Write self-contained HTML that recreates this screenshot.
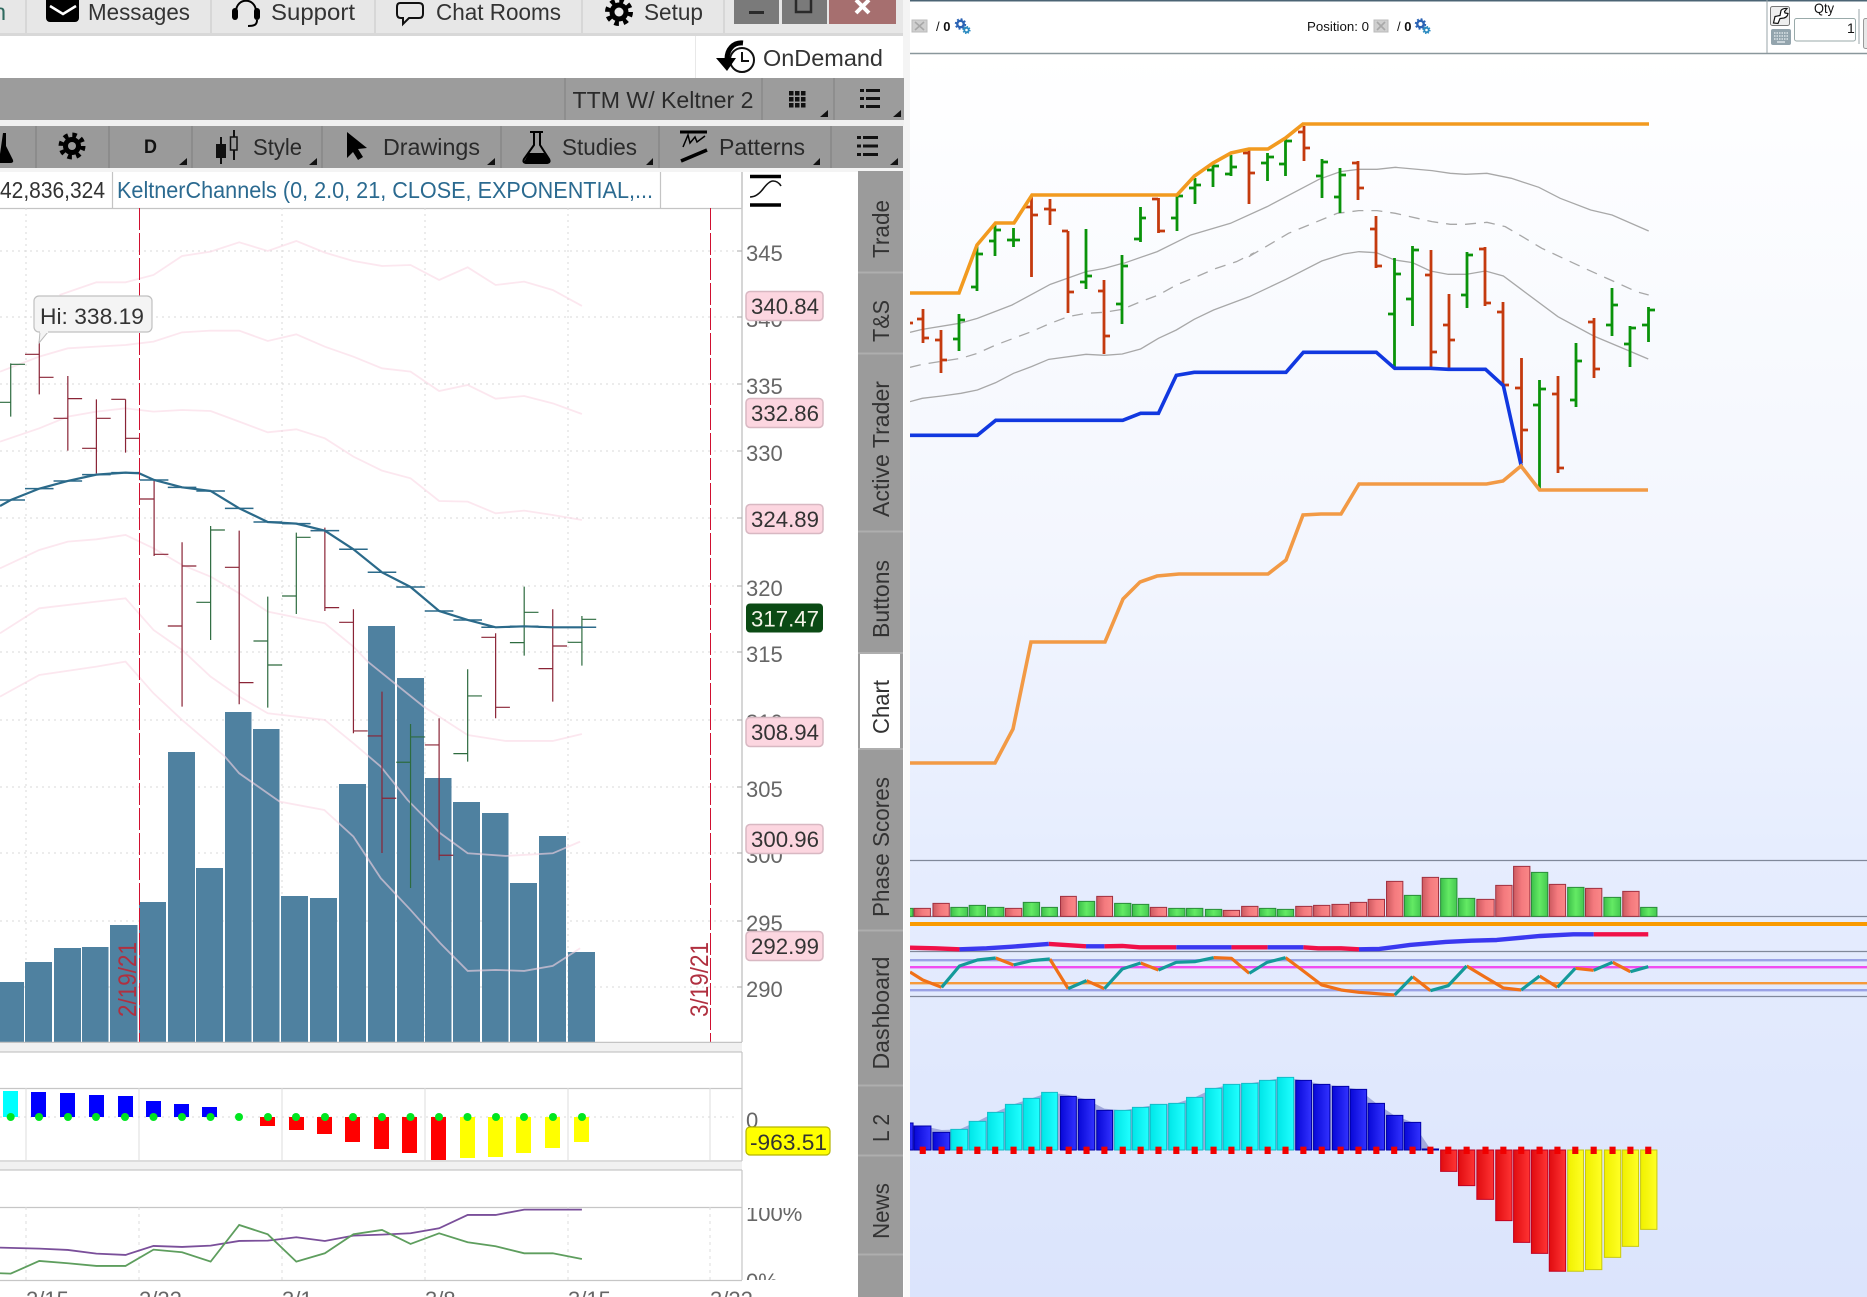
<!DOCTYPE html>
<html><head><meta charset="utf-8"><title>Chart</title>
<style>
html,body{margin:0;padding:0;width:1867px;height:1297px;overflow:hidden;background:#fff}
svg{display:block}
text{font-family:"Liberation Sans",sans-serif}
.n *{vector-effect:non-scaling-stroke}
.r rect{fill:url(#gr);stroke:#a03040;stroke-width:1}
.g rect{fill:url(#gg);stroke:#2a8c3a;stroke-width:1}
.b rect{fill:url(#gb);stroke:#0000a8;stroke-width:1}
.c rect{fill:url(#gc);stroke:#14bcc8;stroke-width:1}
.d rect{fill:url(#gd);stroke:#c00020;stroke-width:1}
.y rect{fill:url(#gy);stroke:#c8c810;stroke-width:1}
.ax{font-size:22px;fill:#666}
.pl{fill:#fcd6e0;stroke:#d8b8c2;stroke-width:1.5}
.pt{font-size:22.5px;fill:#333}
.tb{font-size:23.5px;fill:#333}
.vt{font-size:23px;fill:#333;text-anchor:middle}
</style></head><body>
<svg width="1867" height="1297" viewBox="0 0 1867 1297" xmlns="http://www.w3.org/2000/svg">
<defs>
<linearGradient id="bg" gradientUnits="userSpaceOnUse" x1="0" y1="54" x2="0" y2="1297"><stop offset="0" stop-color="#fff"/><stop offset=".4" stop-color="#f3f6fe"/><stop offset=".64" stop-color="#e6edfe"/><stop offset="1" stop-color="#dbe4fc"/></linearGradient>
<linearGradient id="gr"><stop offset="0" stop-color="#cc5a60"/><stop offset=".5" stop-color="#f47a7e"/><stop offset="1" stop-color="#fa8888"/></linearGradient>
<linearGradient id="gg"><stop offset="0" stop-color="#3cc04a"/><stop offset=".5" stop-color="#64ea64"/><stop offset="1" stop-color="#44c850"/></linearGradient>
<linearGradient id="gb"><stop offset="0" stop-color="#0808d8"/><stop offset="1" stop-color="#3232ff"/></linearGradient>
<linearGradient id="gc"><stop offset="0" stop-color="#00e6e8"/><stop offset="1" stop-color="#20ffff"/></linearGradient>
<linearGradient id="gd"><stop offset="0" stop-color="#e00c10"/><stop offset="1" stop-color="#ff3434"/></linearGradient>
<linearGradient id="gy"><stop offset="0" stop-color="#f0f000"/><stop offset="1" stop-color="#ffff24"/></linearGradient>
<clipPath id="p3"><rect x="742" y="1208" width="100" height="72"/></clipPath>
<clipPath id="pm"><rect x="0" y="208" width="742" height="834"/></clipPath>
<clipPath id="rp"><rect x="910" y="54" width="957" height="1243"/></clipPath>
</defs>

<!-- top tab row -->
<rect width="904" height="33" fill="#e7e7e7"/>
<rect y="33" width="904" height="3" fill="#d8d8d8"/>
<path d="M26 0V33M211 0V33M375 0V33M582 0V33M724 0V33" stroke="#d2d2d2" stroke-width="1.5"/>
<text x="-7" y="20" class="tb" style="fill:#2f6a5f">n</text>
<rect x="46" y="-4" width="33" height="26" rx="4" fill="#000"/>
<path d="M50 6L63 14L76 6" fill="none" stroke="#fff" stroke-width="2.5"/>
<text x="88" y="20" class="tb" textLength="102" lengthAdjust="spacingAndGlyphs">Messages</text>
<path d="M236 12C236-3 256-3 256 12" fill="none" stroke="#000" stroke-width="2"/>
<rect x="232" y="8" width="6" height="12" rx="3" fill="#000"/><rect x="254" y="8" width="6" height="12" rx="3" fill="#000"/>
<path d="M257 20C257 25 254 26 248 26" fill="none" stroke="#000" stroke-width="2"/>
<text x="271" y="20" class="tb" textLength="84" lengthAdjust="spacingAndGlyphs">Support</text>
<path d="M400 3H419Q423 3 423 7V14Q423 18 419 18H409L403 24V18H401Q397 18 397 14V7Q397 3 400 3Z" fill="none" stroke="#111" stroke-width="2"/>
<text x="436" y="20" class="tb" textLength="125" lengthAdjust="spacingAndGlyphs">Chat Rooms</text>
<circle cx="619" cy="12" r="9.5" fill="#000"/><circle cx="619" cy="12" r="11.5" fill="none" stroke="#000" stroke-width="5" stroke-dasharray="4.5 4.53"/><circle cx="619" cy="12" r="4.5" fill="#e7e7e7"/>
<text x="644" y="20" class="tb" textLength="59" lengthAdjust="spacingAndGlyphs">Setup</text>
<rect x="734" y="0" width="45" height="24" fill="#7a7a7a"/><rect x="749" y="11" width="15" height="3" fill="#2a2a2a"/>
<rect x="782" y="0" width="45" height="24" fill="#7a7a7a"/><path d="M796 -2V12H811V-2Z" fill="none" stroke="#2a2a2a" stroke-width="2.5"/>
<rect x="829" y="0" width="67" height="24" fill="#a66f6f"/><path d="M856 0L869 13M869 0L856 13" stroke="#fff" stroke-width="4"/>

<!-- OnDemand row -->
<rect x="0" y="36" width="904" height="42" fill="#fff"/>
<path d="M695.5 36V78" stroke="#e8e8e8"/>
<rect x="903" y="0" width="7" height="210" fill="#f4f4f4"/>
<circle cx="742" cy="60" r="12" fill="#fff" stroke="#111" stroke-width="2"/>
<path d="M742 52V61H749" fill="none" stroke="#111" stroke-width="2"/>
<path d="M743 43C733 42 727 50 727 59" fill="none" stroke="#000" stroke-width="5"/>
<path d="M716 58H736L727 71Z" fill="#000"/>
<text x="763" y="66" class="tb" textLength="120" lengthAdjust="spacingAndGlyphs">OnDemand</text>

<!-- grey row 1 -->
<rect y="78" width="904" height="42" fill="#9c9c9c"/>
<path d="M565 78V120M762 78V120M834 78V120" stroke="#8a8a8a" stroke-width="1.5"/>
<text x="572.5" y="108" class="tb" textLength="181" lengthAdjust="spacingAndGlyphs" style="fill:#2a2a2a">TTM W/ Keltner 2</text>
<g fill="#111"><rect x="789" y="91" width="4.5" height="4.5"/><rect x="795" y="91" width="4.5" height="4.5"/><rect x="801" y="91" width="4.5" height="4.5"/><rect x="789" y="97" width="4.5" height="4.5"/><rect x="795" y="97" width="4.5" height="4.5"/><rect x="801" y="97" width="4.5" height="4.5"/><rect x="789" y="103" width="4.5" height="4.5"/><rect x="795" y="103" width="4.5" height="4.5"/><rect x="801" y="103" width="4.5" height="4.5"/></g>
<path d="M860 90.5H864M866 90.5H880M860 98.5H864M866 98.5H880M860 106.5H864M866 106.5H880" stroke="#111" stroke-width="3"/>
<path d="M828 110V117H820ZM901 110V117H893Z" fill="#111"/>
<rect y="120" width="904" height="6" fill="#f0f0f0"/>

<!-- grey row 2 -->
<rect y="126" width="903" height="42" fill="#9a9a9a"/>
<path d="M36 126V168M109 126V168M192 126V168M322 126V168M501 126V168M659 126V168M831 126V168" stroke="#888" stroke-width="1.5"/>
<path d="M3 133H6V146L13 160Q14 163 10 163H0V154Z" fill="#000"/>
<circle cx="72" cy="146" r="9" fill="#000"/><circle cx="72" cy="146" r="11" fill="none" stroke="#000" stroke-width="5" stroke-dasharray="4.3 4.34"/><circle cx="72" cy="146" r="4" fill="#9a9a9a"/>
<text x="144" y="153" style="font-size:19px;font-weight:bold;fill:#111" textLength="13" lengthAdjust="spacingAndGlyphs">D</text>
<path d="M187 158V165H179ZM317 158V165H309ZM495 158V165H487ZM653 158V165H646ZM820 158V165H813ZM898 158V165H890Z" fill="#111"/>
<path d="M221 137V164" stroke="#111" stroke-width="2"/>
<rect x="216" y="144" width="10" height="14" fill="#111"/>
<path d="M234 130V160" stroke="#111" stroke-width="2"/>
<rect x="230.5" y="137" width="6.5" height="13" fill="#9a9a9a" stroke="#111" stroke-width="1.5"/>
<text x="253" y="155" class="tb" textLength="49" lengthAdjust="spacingAndGlyphs" style="fill:#2a2a2a">Style</text>
<path d="M347 132V158L353 152L358 160L363 157L358 149L367 148Z" fill="#000"/>
<text x="383" y="155" class="tb" textLength="97" lengthAdjust="spacingAndGlyphs" style="fill:#2a2a2a">Drawings</text>
<path d="M530 132H543M534 132V145L524 159Q522 163 527 163H546Q551 163 549 159L540 145V132" fill="none" stroke="#000" stroke-width="2"/>
<path d="M529 153H544L549 160Q550 163 546 163H527Q523 163 525 160Z" fill="#000"/>
<text x="562" y="155" class="tb" textLength="75" lengthAdjust="spacingAndGlyphs" style="fill:#2a2a2a">Studies</text>
<path d="M680 132H707" stroke="#000" stroke-width="3"/>
<path d="M683 147L688 135L690 143L695 137L697 142L705 136" fill="none" stroke="#000" stroke-width="1.5"/>
<path d="M681 161L707 150" stroke="#000" stroke-width="3.5"/>
<text x="719" y="155" class="tb" textLength="86" lengthAdjust="spacingAndGlyphs" style="fill:#2a2a2a">Patterns</text>
<path d="M857 137.5H861M863 137.5H878M857 146H861M863 146H878M857 154.5H861M863 154.5H878" stroke="#111" stroke-width="3"/>
<rect y="168" width="903" height="4" fill="#f4f4f4"/>

<!-- info row -->
<rect x="0" y="172" width="742" height="36" fill="#fff"/>
<path d="M0 208.5H742M112.5 172V208M660.5 172V208M742 172V208" stroke="#c4c4c4" stroke-width="1.2"/>
<text x="0" y="198" class="tb" textLength="105" lengthAdjust="spacingAndGlyphs">42,836,324</text>
<text x="117" y="198" class="tb" textLength="536" lengthAdjust="spacingAndGlyphs" style="fill:#2b6a90">KeltnerChannels (0, 2.0, 21, CLOSE, EXPONENTIAL,...</text>
<path d="M750 176.5H781M750 205H781" stroke="#000" stroke-width="3.5"/>
<path d="M750 197Q757 197 763 189Q769 181 773 181Q778 181 781 186" fill="none" stroke="#111" stroke-width="1.6"/>

<!-- main left chart -->
<g stroke="#d9d9d9" stroke-dasharray="2 4" stroke-width="1">
<path d="M26 208V1042M282 208V1042M425 208V1042M568 208V1042"/>
<path d="M0 251H736M0 317H736M0 384H736M0 451H736M0 518H736M0 586H736M0 652H736M0 720H736M0 787H736M0 853H736M0 921H736M0 987H736"/>
</g>
<g fill="#4f81a0">
<rect x="0" y="982" width="24" height="60"/><rect x="25" y="962" width="27" height="80"/><rect x="54" y="948" width="27" height="94"/><rect x="82" y="947" width="26.5" height="95"/><rect x="110" y="925" width="27.5" height="117"/><rect x="139" y="902" width="27" height="140"/><rect x="168" y="752" width="27" height="290"/><rect x="196" y="868" width="27" height="174"/><rect x="225" y="712" width="26.5" height="330"/><rect x="253" y="729" width="26.5" height="313"/><rect x="281" y="896" width="27" height="146"/><rect x="310" y="898" width="27" height="144"/><rect x="339" y="784" width="27" height="258"/><rect x="368" y="626" width="27" height="416"/><rect x="397" y="678" width="27" height="364"/><rect x="425" y="778" width="26.5" height="264"/><rect x="453" y="802" width="27" height="240"/><rect x="482" y="813" width="26.5" height="229"/><rect x="510" y="883" width="27" height="159"/><rect x="539" y="836" width="27" height="206"/><rect x="568" y="952" width="27" height="90"/>
</g>
<g class="n" fill="none" stroke="rgba(250,215,228,.6)" stroke-width="1.8">
<g transform="translate(0,0) scale(.595,.3333)"><polyline points="100,885 162,847 211,847 258,825 306,768 354,755 402,727 450,753 498,723 546,758 594,783 642,798 690,795 738,840 786,802 833,855 881,845 929,870 978,918"/></g>
<g transform="translate(0,300) scale(.595,.3333)">
<polyline points="0,215 66,170 114,145 162,140 211,135 258,125 306,97 354,92 402,92 450,123 498,103 546,140 594,170 642,205 690,215 738,273 786,255 833,296 881,288 929,310 978,342"/>
<polyline points="0,425 66,385 114,350 162,335 211,325 258,335 306,330 354,333 402,365 450,397 498,388 546,415 594,470 642,512 690,535 738,603 786,605 833,640 881,632 929,645 978,660"/>
<polyline points="0,805 66,750 114,725 162,718 211,705 258,745 306,795 354,830 402,880 450,935 546,970 594,1040 618,1085 712,1220 786,1305 850,1323 929,1323 978,1302"/>
<polyline points="0,1000 66,925 162,905 211,895 258,990 306,1050 354,1130 402,1190 450,1240 546,1260 594,1330 640,1400 685,1500 740,1600 786,1660 850,1668 929,1660 975,1625"/>
<polyline points="0,1190 66,1125 162,1100 211,1085 258,1180 306,1260 378,1370 402,1420 470,1505 545,1530 594,1610 640,1735 690,1830 740,1930 786,2013 833,2010 881,2013 929,1998 975,1945"/>
</g></g>
<g class="n" transform="translate(0,300) scale(.595,.3333)" fill="none" stroke-width="1.2">
<path stroke="#8a2436" d="M66 125V283M42 163H66M66 232H90M114 228V452M90 355H114M114 296H138M162 298V520M138 445H162M162 355H186M211 298V458M187 298H211M211 415H235M259 540V768M235 597H259M259 763H283M306 727V1220M282 978H306M306 798H330M402 692V1213M378 802H402M402 1148H426M546 683V933M522 692H546M546 923H570M594 928V1300M570 967H594M594 1293H618M642 1175V1659M618 1308H642M642 1495H666M738 1255V1681M714 1335H738M738 1666H762M833 1000V1255M809 1012H833M833 1222H857M929 928V1205M905 1106H929M929 1038H953"/>
<path stroke="#2d6b3f" d="M18 190V350M-6 307H18M18 193H42M354 678V1020M330 907H354M354 690H378M450 890V1223M426 1023H450M450 1095H474M498 698V942M474 888H498M498 712H522M690 1272V1764M666 1387H690M690 1311H714M786 1108V1385M762 1361H786M786 1188H810M881 860V1067M857 1028H881M881 937H905M978 948V1097M954 1027H978M978 958H1002"/>
<polyline stroke="#2b6a8a" stroke-width="2.2" points="0,618 18,600 66,566 114,543 162,524 211,518 234,520 259,540 306,562 354,573 402,625 450,666 498,671 546,692 594,748 642,817 690,861 738,933 786,960 833,982 881,979 929,982 978,982"/>
<path stroke="#2b6a8a" stroke-width="1.5" d="M-6 600H42M42 566H90M90 543H138M138 524H186M187 518H235M235 540H283M282 562H330M330 573H378M378 625H426M426 666H474M474 671H522M522 692H570M570 748H618M618 817H666M666 861H714M714 933H762M762 960H810M809 982H857M857 979H905M905 982H953M954 982H1002"/>
</g>
<path d="M139.5 208V1042M710.5 208V1042" stroke="#d01030" stroke-width="1" stroke-dasharray="22 3"/>
<text transform="translate(136,1017) rotate(-90)" style="font-size:25px;fill:#b03040" textLength="75" lengthAdjust="spacingAndGlyphs">2/19/21</text>
<text transform="translate(708,1017) rotate(-90)" style="font-size:25px;fill:#b03040" textLength="75" lengthAdjust="spacingAndGlyphs">3/19/21</text>
<path d="M40 332H48L39 343Z" fill="#f4f4f4" stroke="#bbb"/>
<rect x="34" y="296" width="118" height="36" rx="5" fill="#f4f4f4" stroke="#c0c0c0" stroke-width="1.2"/>
<rect x="40" y="330" width="8" height="3" fill="#f4f4f4"/>
<text x="40" y="324" class="pt" textLength="104" lengthAdjust="spacingAndGlyphs">Hi: 338.19</text>

<!-- axis -->
<path d="M742 172V1042" stroke="#c8c8c8" stroke-width="1.5"/>
<path d="M0 1042.5H742" stroke="#c4c4c4" stroke-width="1.5"/>
<path d="M737 251H742M737 317H742M737 384H742M737 451H742M737 518H742M737 586H742M737 652H742M737 720H742M737 787H742M737 853H742M737 921H742M737 987H742" stroke="#aaa"/>
<g class="ax"><text x="746" y="261" class="ax">345</text><text x="746" y="327" class="ax">340</text><text x="746" y="394" class="ax">335</text><text x="746" y="461" class="ax">330</text><text x="746" y="596" class="ax">320</text><text x="746" y="662" class="ax">315</text><text x="746" y="730" class="ax">310</text><text x="746" y="797" class="ax">305</text><text x="746" y="863" class="ax">300</text><text x="746" y="931" class="ax">295</text><text x="746" y="997" class="ax">290</text></g>
<rect class="pl" x="746" y="291.5" width="77" height="29" rx="4"/><text x="751" y="314" class="pt" textLength="68" lengthAdjust="spacingAndGlyphs">340.84</text>
<rect class="pl" x="746" y="398.5" width="77" height="29" rx="4"/><text x="751" y="421" class="pt" textLength="68" lengthAdjust="spacingAndGlyphs">332.86</text>
<rect class="pl" x="746" y="504.5" width="77" height="29" rx="4"/><text x="751" y="527" class="pt" textLength="68" lengthAdjust="spacingAndGlyphs">324.89</text>
<rect x="746" y="603.5" width="77" height="29" rx="4" fill="#0b4a14"/><text x="751" y="626.5" class="pt" textLength="68" lengthAdjust="spacingAndGlyphs" style="fill:#f4f4e8">317.47</text>
<rect class="pl" x="746" y="717.5" width="77" height="29" rx="4"/><text x="751" y="740" class="pt" textLength="68" lengthAdjust="spacingAndGlyphs">308.94</text>
<rect class="pl" x="746" y="824.5" width="77" height="29" rx="4"/><text x="751" y="847" class="pt" textLength="68" lengthAdjust="spacingAndGlyphs">300.96</text>
<rect class="pl" x="746" y="931.5" width="77" height="29" rx="4"/><text x="751" y="954" class="pt" textLength="68" lengthAdjust="spacingAndGlyphs">292.99</text>

<!-- panel 2 -->
<rect x="0" y="1043" width="742" height="9" fill="#f1f1f1"/>
<path d="M0 1052H742M0 1088.5H742M0 1161H742M742 1052V1161" stroke="#c6c6c6" stroke-width="1.2"/>
<path d="M26 1088V1161M139 1088V1161M282 1088V1161M425 1088V1161M568 1088V1161M710 1088V1161" stroke="#dcdcdc"/>
<path d="M0 1117H736" stroke="#d8d8d8" stroke-dasharray="2 4"/>
<g fill="#0000ff"><rect x="31" y="1092" width="15" height="25"/><rect x="60" y="1093" width="15" height="24"/><rect x="89" y="1095" width="15" height="22"/><rect x="118" y="1096" width="15" height="21"/><rect x="146" y="1101" width="15" height="16"/><rect x="174" y="1104" width="15" height="13"/><rect x="202" y="1107" width="15" height="10"/></g>
<rect x="3" y="1091" width="15" height="26" fill="#00ffff"/>
<g fill="#ff0000"><rect x="260" y="1117" width="15" height="9"/><rect x="289" y="1117" width="15" height="13"/><rect x="317" y="1117" width="15" height="17"/><rect x="345" y="1117" width="15" height="25"/><rect x="374" y="1117" width="15" height="32"/><rect x="402" y="1117" width="15" height="36"/><rect x="431" y="1117" width="15" height="43"/></g>
<g fill="#ffff00"><rect x="460" y="1117" width="15" height="41"/><rect x="488" y="1117" width="15" height="40"/><rect x="516" y="1117" width="15" height="36"/><rect x="545" y="1117" width="15" height="31"/><rect x="574" y="1117" width="15" height="25"/></g>
<g fill="#00e620"><circle cx="10.7" cy="1117" r="4"/><circle cx="39" cy="1117" r="4"/><circle cx="68" cy="1117" r="4"/><circle cx="96" cy="1117" r="4"/><circle cx="125" cy="1117" r="4"/><circle cx="153.5" cy="1117" r="4"/><circle cx="182" cy="1117" r="4"/><circle cx="210.5" cy="1117" r="4"/><circle cx="239" cy="1117" r="4"/><circle cx="268" cy="1117" r="4"/><circle cx="296" cy="1117" r="4"/><circle cx="325" cy="1117" r="4"/><circle cx="353" cy="1117" r="4"/><circle cx="382" cy="1117" r="4"/><circle cx="410.5" cy="1117" r="4"/><circle cx="439" cy="1117" r="4"/><circle cx="467.5" cy="1117" r="4"/><circle cx="496" cy="1117" r="4"/><circle cx="524" cy="1117" r="4"/><circle cx="553" cy="1117" r="4"/><circle cx="582" cy="1117" r="4"/></g>
<text x="746" y="1128" class="ax">0</text>
<rect x="746" y="1127" width="84" height="28" rx="4" fill="#ffff00" stroke="#b4b400" stroke-width="1.2"/>
<text x="750" y="1150" class="pt" textLength="77" lengthAdjust="spacingAndGlyphs">-963.51</text>

<!-- panel 3 -->
<rect x="0" y="1162" width="742" height="8" fill="#f1f1f1"/>
<path d="M0 1170H742M0 1207.5H742M0 1280.5H742M742 1170V1280" stroke="#c6c6c6" stroke-width="1.2"/>
<path d="M26 1207V1280M139 1207V1280M282 1207V1280M425 1207V1280M568 1207V1280M710 1207V1280" stroke="#dcdcdc" stroke-dasharray="3 4"/>
<g class="n" transform="translate(0,800) scale(.595,.3333)" fill="none" stroke-width="1.8">
<polyline stroke="#7a4f9a" points="0,1343 66,1346 114,1350 162,1361 211,1365 258,1338 306,1341 354,1337 402,1323 450,1322 498,1312 546,1323 594,1307 642,1304 690,1300 738,1285 786,1245 833,1245 881,1229 929,1229 978,1229"/>
<polyline stroke="#5e9e5e" points="0,1420 18,1421 66,1383 114,1390 162,1398 211,1398 258,1349 306,1357 354,1385 402,1275 450,1303 498,1385 546,1360 594,1303 642,1290 690,1332 738,1300 786,1327 833,1339 881,1360 929,1360 978,1377"/>
</g>
<g clip-path="url(#p3)"><text x="746" y="1221" class="ax">100%</text><text x="746" y="1289" class="ax">0%</text></g>
<g class="ax"><text x="26" y="1307" class="ax">2/15</text><text x="139" y="1307" class="ax">2/22</text><text x="282" y="1307" class="ax">3/1</text><text x="425" y="1307" class="ax">3/8</text><text x="568" y="1307" class="ax">3/15</text><text x="710" y="1307" class="ax">3/22</text></g>

<!-- vertical tabs -->
<rect x="858" y="171" width="45" height="1126" fill="#9b9b9b"/>
<path d="M858 272.5H903M858 353.5H903M858 531.5H903M858 653H903M858 749H903M858 930.5H903M858 1085.5H903M858 1155.5H903M858 1254.5H903" stroke="#aeaeae" stroke-width="2"/>
<rect x="860" y="654" width="40" height="94" fill="#fff"/>
<text class="vt" transform="translate(889,229) rotate(-90)" textLength="58" lengthAdjust="spacingAndGlyphs">Trade</text>
<text class="vt" transform="translate(889,321) rotate(-90)" textLength="42" lengthAdjust="spacingAndGlyphs">T&amp;S</text>
<text class="vt" transform="translate(889,449) rotate(-90)" textLength="136" lengthAdjust="spacingAndGlyphs">Active Trader</text>
<text class="vt" transform="translate(889,599) rotate(-90)" textLength="78" lengthAdjust="spacingAndGlyphs">Buttons</text>
<text class="vt" transform="translate(889,707) rotate(-90)" textLength="54" lengthAdjust="spacingAndGlyphs">Chart</text>
<text class="vt" transform="translate(889,847) rotate(-90)" textLength="140" lengthAdjust="spacingAndGlyphs">Phase Scores</text>
<text class="vt" transform="translate(889,1013) rotate(-90)" textLength="113" lengthAdjust="spacingAndGlyphs">Dashboard</text>
<text class="vt" transform="translate(889,1128) rotate(-90)" textLength="28" lengthAdjust="spacingAndGlyphs">L 2</text>
<text class="vt" transform="translate(889,1211) rotate(-90)" textLength="56" lengthAdjust="spacingAndGlyphs">News</text>

<!-- right panel -->
<rect x="904" y="210" width="6" height="1087" fill="#fafafa"/>
<rect x="910" y="54" width="957" height="1243" fill="url(#bg)"/>
<rect x="910" y="0" width="957" height="54" fill="#fff"/>
<path d="M910 0.7H1867" stroke="#4b6474" stroke-width="1.5"/>
<path d="M910 53.5H1867" stroke="#8a979c" stroke-width="1.5"/>
<path d="M1767 0V53M1859 9V44" stroke="#9aa4a8"/>
<rect x="912" y="20" width="15" height="12" fill="#cfcfcf" stroke="#bbb"/><path d="M915 22L924 30M924 22L915 30" stroke="#a8a8a8" stroke-width="1.6"/>
<text x="936" y="31" style="font-size:13px;fill:#111">/ <tspan font-weight="bold">0</tspan></text>
<g fill="none" stroke="#2a62b4"><circle cx="960.5" cy="24" r="3.2" stroke-width="2.4"/><circle cx="960.5" cy="24" r="4.8" stroke-width="1.8" stroke-dasharray="1.9 1.87"/></g>
<g fill="none" stroke="#2a8ac0"><circle cx="966.5" cy="30" r="2.2" stroke-width="1.8"/><circle cx="966.5" cy="30" r="3.4" stroke-width="1.4" stroke-dasharray="1.4 1.27"/></g>
<text x="1307" y="31" style="font-size:13.3px;fill:#111" textLength="62" lengthAdjust="spacingAndGlyphs">Position: 0</text>
<rect x="1374" y="20" width="14" height="12" fill="#cfcfcf" stroke="#bbb"/><path d="M1377 22L1385 30M1385 22L1377 30" stroke="#a8a8a8" stroke-width="1.6"/>
<text x="1397" y="31" style="font-size:13px;fill:#111">/ <tspan font-weight="bold">0</tspan></text>
<g fill="none" stroke="#2a62b4"><circle cx="1420.5" cy="24" r="3.2" stroke-width="2.4"/><circle cx="1420.5" cy="24" r="4.8" stroke-width="1.8" stroke-dasharray="1.9 1.87"/></g>
<g fill="none" stroke="#2a8ac0"><circle cx="1426.5" cy="30" r="2.2" stroke-width="1.8"/><circle cx="1426.5" cy="30" r="3.4" stroke-width="1.4" stroke-dasharray="1.4 1.27"/></g>
<rect x="1770.5" y="6.5" width="19" height="19" rx="2" fill="#eee" stroke="#777"/>
<path d="M1773.5 23L1775 16.5L1780 15.5L1781 10.5Q1783 8 1787 8.5L1784.5 11.5L1785 13L1788 13.5Q1787.5 17 1784 18L1780 18.5L1778 23.5Z" fill="#fff" stroke="#111" stroke-width="1.2"/>
<rect x="1771" y="29" width="20" height="16" rx="2" fill="#93a4ad"/>
<path d="M1774 33H1788M1774 36H1788M1774 39H1788" stroke="#dde4e8" stroke-dasharray="1.5 1" stroke-width="1.6"/><path d="M1777 42H1785" stroke="#dde4e8" stroke-width="1.5"/>
<text x="1814" y="13" style="font-size:14px;fill:#111" textLength="20" lengthAdjust="spacingAndGlyphs">Qty</text>
<rect x="1794.5" y="18.5" width="61" height="22.5" rx="2" fill="#fff" stroke="#9aa"/>
<text x="1847" y="33" style="font-size:14px;fill:#111">1</text>
<rect x="1863.5" y="18.5" width="6" height="30" rx="2" fill="#e8e8e8" stroke="#999"/>

<g clip-path="url(#rp)">
<!-- keltner grey -->
<g class="n" fill="none" stroke="#a8a8a8" stroke-width="1.3">
<g transform="translate(910,250) scale(.5102,.3333)">
<polyline points="0,247 24,238 97,220 132,205 200,165 275,103 345,65 381,55 416,40"/>
<polyline points="0,455 24,445 62,438 100,430 132,420 168,398 203,370 238,350 272,328 345,313 381,316 416,312 452,297 487,265 522,240 557,208 595,180 665,140 737,88 807,33 850,12 880,5 914,8 950,30 985,38 1020,63 1055,73 1090,73 1128,63 1163,78 1198,118 1270,200 1340,258 1410,303 1447,327"/>
<polyline stroke-dasharray="11 8" points="0,352 24,343 100,325 132,310 168,285 203,265 238,245 272,222 310,200 345,190 381,187 416,178 452,155 487,135 522,105 557,83 600,55 640,35 675,8"/>
</g>
<g transform="translate(910,0) scale(.6105,.3333)">
<polyline points="350,790 405,755 460,705 525,670 585,620 670,538 705,515 735,508 765,508 795,502 855,512 885,520 910,523 945,520 985,535 1030,562 1065,595 1115,630 1150,645 1210,693"/>
<polyline stroke-dasharray="11 8" points="555,770 620,700 660,670 700,640 735,632 765,632 795,640 855,665 885,673 910,673 945,667 975,680 1005,712 1035,745 1070,775 1105,805 1150,842 1190,875 1210,885"/>
</g></g>
<!-- OHLC -->
<path fill="none" stroke="#0a930a" stroke-width="2.8" d="M959 314V351M953 339H959M959 320H965M977 245V291M971 287H977M977 254H983M995 225V256M989 241H995M995 230H1001M1013.5 228V247M1007 240H1020M1086 229V289M1080 282H1086M1086 276H1092M1122 255V324M1116 304H1122M1122 266H1128M1140.5 207V242M1134 239H1140M1140 218H1146M1177 195V231M1171 218H1177M1177 196H1183M1195 178V204M1189 188H1195M1195 185H1201M1213 165V187M1207 170H1213M1213 166H1219M1231 155V176M1225 174H1231M1231 167H1237M1267.5 153V181M1261 163H1267M1267 157H1274M1285.5 139V176M1279 164H1285M1285 141H1292M1322 159V198M1316 176H1322M1322 162H1328M1340 168V213M1334 197H1340M1340 175H1346M1394.5 258V368M1388 314H1394M1394 274H1401M1412.5 246V326M1406 299H1412M1412 250H1419M1467 252V308M1461 295H1467M1467 255H1473M1539.5 380V489M1533 405H1539M1539 389H1546M1576 343V407M1570 400H1576M1576 361H1582M1612 288V336M1606 325H1612M1612 305H1618M1630 326V367M1624 344H1630M1630 328H1636M1648.5 307V342M1642 325H1648M1648 310H1655"/>
<path fill="none" stroke="#c43a0e" stroke-width="2.8" d="M910 323H913M923 309V343M917 319H923M923 338H929M941 330V373M935 340H941M941 360H947M1031.5 197V277M1025 207H1031M1031 215H1038M1050 199V225M1044 209H1050M1050 210H1056M1068 231V313M1062 231H1068M1068 292H1074M1104 280V354M1098 291H1104M1104 336H1110M1158.5 198V233M1152 199H1158M1158 231H1165M1249 150V204M1243 153H1249M1249 173H1255M1304 126V161M1298 132H1304M1304 148H1310M1358 161V200M1352 163H1358M1358 188H1364M1376 216V268M1370 229H1376M1376 266H1382M1431 250V367M1425 275H1431M1431 352H1437M1449 294V368M1443 325H1449M1449 340H1455M1485 247V306M1479 249H1485M1485 303H1491M1503 302V386M1497 312H1503M1503 385H1509M1521.5 358V463M1515 388H1521M1521 430H1528M1558 376V473M1552 394H1558M1558 468H1564M1594 318V378M1588 322H1594M1594 369H1600"/>
<!-- big lines -->
<polyline fill="none" stroke="#f29a1f" stroke-width="3.6" points="910,293 959,293 977,245 995.5,223 1014,223 1032,195 1177,195 1194.5,176 1213,163 1231,153 1249,149 1268,149 1285.5,138 1303,124 1649,124"/>
<g class="n" fill="none" transform="translate(910,250) scale(.5102,.3333)"><polyline stroke="#1138e0" stroke-width="3.6" points="0,556 132,556 168,511 417,511 452,490 487,490 522,376 557,367 737,367 771,307 914,307 950,355 1020,355 1055,358 1128,358 1163,407 1198,648"/></g>
<polyline fill="none" stroke="#f29a45" stroke-width="3.6" points="910,763 995,763 1013,729 1031,642 1105,642 1123,599 1140,582 1157,576 1179,574 1268,574 1286,560 1303,515 1321,514 1341,514 1359,484 1486.5,484 1503,481 1521,466 1539.6,490 1648,490"/>

<!-- histogram -->
<path d="M910 860.5H1867M910 916.5H1867M910 951.5H1867M910 996.5H1867" stroke="#80889a" stroke-width="1.2"/>
<g class="n" transform="translate(910,840) scale(.5102,.3333)">
<g class="r">
<rect x="8" y="205" width="32" height="24"/><rect x="45" y="190" width="32" height="39"/><rect x="187" y="205" width="32" height="24"/><rect x="295" y="169" width="31" height="60"/><rect x="366" y="169" width="31" height="60"/><rect x="471" y="202" width="32" height="27"/><rect x="614" y="211" width="32" height="18"/><rect x="650" y="199" width="32" height="30"/><rect x="756" y="199" width="32" height="30"/><rect x="791" y="196" width="32" height="33"/><rect x="827" y="193" width="33" height="36"/><rect x="863" y="187" width="32" height="42"/><rect x="898" y="178" width="32" height="51"/><rect x="934" y="124" width="32" height="105"/><rect x="1004" y="112" width="32" height="117"/><rect x="1111" y="178" width="34" height="51"/><rect x="1148" y="136" width="32" height="93"/><rect x="1183" y="79" width="32" height="150"/><rect x="1253" y="133" width="32" height="96"/><rect x="1324" y="145" width="32" height="84"/><rect x="1397" y="154" width="32" height="75"/>
</g>
<g class="g">
<rect x="-10" y="205" width="16" height="24"/><rect x="80" y="202" width="33" height="27"/><rect x="116" y="196" width="32" height="33"/><rect x="152" y="202" width="32" height="27"/><rect x="222" y="187" width="32" height="42"/><rect x="258" y="202" width="31" height="27"/><rect x="330" y="184" width="32" height="45"/><rect x="401" y="190" width="32" height="39"/><rect x="436" y="193" width="32" height="36"/><rect x="507" y="205" width="32" height="24"/><rect x="542" y="205" width="32" height="24"/><rect x="579" y="208" width="32" height="21"/><rect x="685" y="205" width="32" height="24"/><rect x="720" y="208" width="32" height="21"/><rect x="969" y="166" width="32" height="63"/><rect x="1040" y="115" width="32" height="114"/><rect x="1075" y="175" width="32" height="54"/><rect x="1218" y="97" width="32" height="132"/><rect x="1289" y="142" width="32" height="87"/><rect x="1360" y="172" width="33" height="57"/><rect x="1432" y="202" width="32" height="27"/>
</g>
</g>
<rect x="910" y="922" width="957" height="4" fill="#f99a00"/>
<!-- oscillator bands -->
<rect x="910" y="959" width="957" height="2.4" fill="#9aa2e6"/>
<rect x="910" y="966" width="957" height="2.4" fill="#f04cf0"/>
<rect x="910" y="982" width="957" height="2.4" fill="#f5993a"/>
<rect x="910" y="989" width="957" height="2.4" fill="#9aa2e6"/>
<g class="n" fill="none" transform="translate(910,840) scale(.5102,.3333)" stroke-linejoin="round">
<g stroke="#f01048" stroke-width="4.4"><polyline points="0,323 50,325 97,328"/><polyline points="272,312 345,319"/><polyline points="381,319 416,318 450,322 522,322"/><polyline points="630,322 701,322"/><polyline points="771,322 800,325 845,325 880,328"/><polyline points="1340,283 1447,283"/></g>
<g stroke="#3a38f0" stroke-width="4.4"><polyline points="97,328 150,325 200,320 272,312"/><polyline points="345,319 381,319"/><polyline points="522,322 630,322"/><polyline points="701,322 771,322"/><polyline points="880,328 920,327 980,315 1050,306 1100,302 1150,300 1235,288 1300,283 1340,283"/></g>
<g stroke="#f07018" stroke-width="3.2"><polyline points="0,396 25,420 62,442"/><polyline points="168,354 203,375"/><polyline points="274,357 310,446"/><polyline points="346,422 381,446"/><polyline points="452,369 487,390"/><polyline points="595,353 630,355 665,400"/><polyline points="736,353 771,393 807,435 845,450 880,457 950,465"/><polyline points="985,410 1020,452"/><polyline points="1091,378 1128,412 1163,444 1198,450"/><polyline points="1234,408 1269,442"/><polyline points="1304,385 1340,391"/><polyline points="1377,367 1412,395"/></g>
<g stroke="#149a9a" stroke-width="3.2"><polyline points="62,442 97,378 132,360 168,354"/><polyline points="203,375 238,362 274,357"/><polyline points="310,446 346,422"/><polyline points="381,446 416,387 452,369"/><polyline points="487,390 522,367 558,365 595,353"/><polyline points="665,400 700,367 736,353"/><polyline points="950,465 985,410"/><polyline points="1020,452 1055,437 1091,378"/><polyline points="1198,450 1234,408"/><polyline points="1269,442 1304,385"/><polyline points="1340,391 1377,367"/><polyline points="1412,395 1447,380"/></g>
</g>

<!-- bottom histogram -->
<g class="n" transform="translate(910,1050) scale(.5102,.3333)">
<polygon fill="#a2aadc" points="25,228 62,240 97,238 132,214 167,187 203,163 238,145 273,127 311,135 346,148 381,176 417,181 452,172 487,163 522,160 558,142 595,115 630,103 665,100 701,91 736,82 771,91 807,103 844,109 879,118 914,160 949,196 985,217 1020,297 1020,300 25,300"/>
<g class="b"><rect x="-10" y="219" width="16" height="81"/><rect x="8" y="228" width="33" height="72"/><rect x="45" y="247" width="33" height="53"/><rect x="295" y="139" width="31" height="161"/><rect x="330" y="148" width="32" height="152"/><rect x="366" y="181" width="31" height="119"/><rect x="756" y="91" width="31" height="209"/><rect x="791" y="103" width="32" height="197"/><rect x="828" y="109" width="32" height="191"/><rect x="863" y="118" width="32" height="182"/><rect x="898" y="160" width="32" height="140"/><rect x="934" y="196" width="32" height="104"/><rect x="969" y="217" width="32" height="83"/><rect x="1004" y="297" width="32" height="3"/></g>
<g class="c"><rect x="80" y="238" width="33" height="62"/><rect x="116" y="214" width="33" height="86"/><rect x="152" y="187" width="32" height="113"/><rect x="187" y="163" width="32" height="137"/><rect x="222" y="145" width="32" height="155"/><rect x="258" y="127" width="31" height="173"/><rect x="401" y="181" width="32" height="119"/><rect x="436" y="172" width="32" height="128"/><rect x="471" y="163" width="32" height="137"/><rect x="507" y="160" width="32" height="140"/><rect x="542" y="142" width="32" height="158"/><rect x="579" y="115" width="32" height="185"/><rect x="614" y="103" width="32" height="197"/><rect x="650" y="100" width="32" height="200"/><rect x="685" y="91" width="32" height="209"/><rect x="720" y="82" width="32" height="218"/></g>
<g class="d"><rect x="1040" y="300" width="32" height="64"/><rect x="1075" y="300" width="32" height="107"/><rect x="1111" y="300" width="33" height="148"/><rect x="1148" y="300" width="32" height="212"/><rect x="1183" y="300" width="32" height="277"/><rect x="1218" y="300" width="32" height="310"/><rect x="1253" y="300" width="32" height="364"/></g>
<g class="y"><rect x="1289" y="300" width="31" height="364"/><rect x="1324" y="300" width="32" height="359"/><rect x="1361" y="300" width="32" height="322"/><rect x="1396" y="300" width="32" height="289"/><rect x="1432" y="300" width="32" height="238"/></g>
<g fill="#f00000"><rect x="19" y="290" width="12" height="22"/><rect x="56" y="290" width="12" height="22"/><rect x="91" y="290" width="12" height="22"/><rect x="126" y="290" width="12" height="22"/><rect x="161" y="290" width="12" height="22"/><rect x="197" y="290" width="12" height="22"/><rect x="232" y="290" width="12" height="22"/><rect x="267" y="290" width="12" height="22"/><rect x="305" y="290" width="12" height="22"/><rect x="340" y="290" width="12" height="22"/><rect x="375" y="290" width="12" height="22"/><rect x="411" y="290" width="12" height="22"/><rect x="446" y="290" width="12" height="22"/><rect x="481" y="290" width="12" height="22"/><rect x="516" y="290" width="12" height="22"/><rect x="552" y="290" width="12" height="22"/><rect x="589" y="290" width="12" height="22"/><rect x="624" y="290" width="12" height="22"/><rect x="659" y="290" width="12" height="22"/><rect x="695" y="290" width="12" height="22"/><rect x="730" y="290" width="12" height="22"/><rect x="765" y="290" width="12" height="22"/><rect x="801" y="290" width="12" height="22"/><rect x="838" y="290" width="12" height="22"/><rect x="873" y="290" width="12" height="22"/><rect x="908" y="290" width="12" height="22"/><rect x="943" y="290" width="12" height="22"/><rect x="979" y="290" width="12" height="22"/><rect x="1014" y="290" width="12" height="22"/><rect x="1049" y="290" width="12" height="22"/><rect x="1085" y="290" width="12" height="22"/><rect x="1122" y="290" width="12" height="22"/><rect x="1157" y="290" width="12" height="22"/><rect x="1192" y="290" width="12" height="22"/><rect x="1228" y="290" width="12" height="22"/><rect x="1263" y="290" width="12" height="22"/><rect x="1298" y="290" width="12" height="22"/><rect x="1334" y="290" width="12" height="22"/><rect x="1371" y="290" width="12" height="22"/><rect x="1406" y="290" width="12" height="22"/><rect x="1441" y="290" width="12" height="22"/></g>
</g>
</g>
</svg>
</body></html>
